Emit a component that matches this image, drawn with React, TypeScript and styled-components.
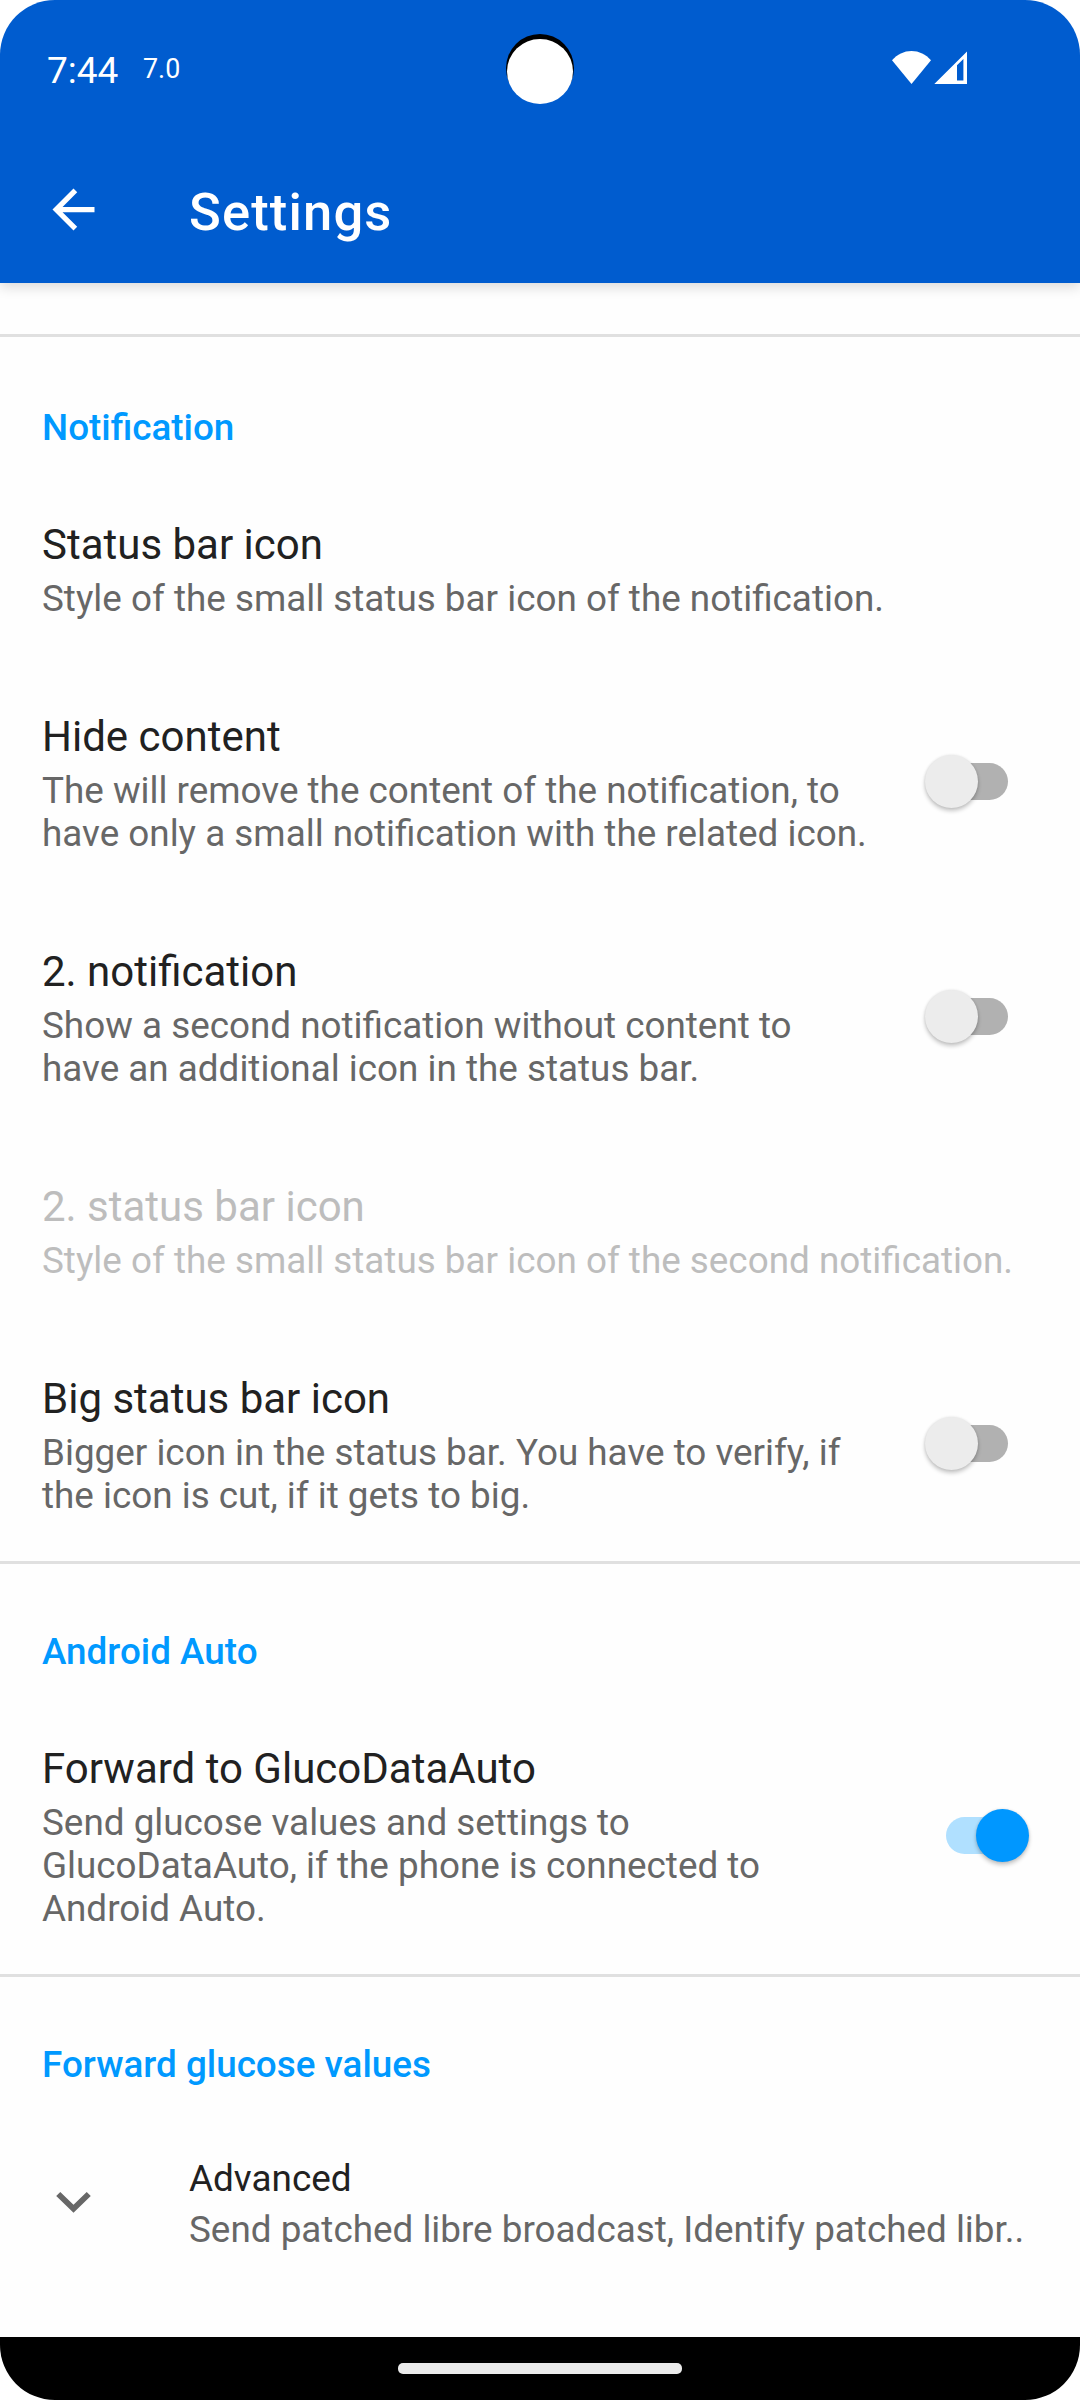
import React from "react";
import styled, { createGlobalStyle } from "styled-components";

const Global = createGlobalStyle`
  * { box-sizing: border-box; }
  body { margin: 0; background: #fff; font-family: Roboto, "Noto Sans", sans-serif; }
`;

const Screen = styled.main`
  position: relative;
  width: 1080px;
  height: 2400px;
  display: flex;
  flex-direction: column;
  border-radius: 55px;
  overflow: hidden;
  background: #fefefe;
`;

const Header = styled.header`
  height: 283px;
  flex: none;
  background: #005ccf;
  color: #fff;
  box-shadow: 0 4px 12px rgba(0, 0, 0, 0.15);
`;

const StatusBar = styled.div`
  height: 136px;
  display: flex;
  align-items: flex-start;
  padding: 49px 113px 0 47px;
`;

const Clock = styled.span`
  width: 96px;
  font-size: 37px;
  line-height: 43px;
`;

const Version = styled.span`
  margin-top: 5px;
  font-size: 26.8px;
  line-height: 30px;
`;

const Signals = styled.svg`
  display: block;
  margin: 2px 0 0 auto;
  fill: #fff;
`;

/* The punch hole lies over the status bar. */
const CameraRing = styled.div`
  position: absolute;
  top: 34px;
  left: 506px;
  width: 68px;
  height: 68px;
  padding: 5px 1px 0;
  border-radius: 50%;
  background: #000;
`;

const CameraLens = styled.div`
  width: 66px;
  height: 65px;
  border-radius: 50%;
  background: #fff;
`;

const AppBar = styled.div`
  height: 147px;
  display: flex;
  align-items: center;
  gap: 84px;
  padding: 0 42px;
`;

const Title = styled.h1`
  margin: 5px 0 0;
  font-size: 52.5px;
  font-weight: 500;
  line-height: 62px;
  letter-spacing: 1.15px;
`;

const Content = styled.div`
  flex: 1;
  min-height: 0;
  padding-top: 51px;
`;

const Section = styled.section<{ $lead?: number }>`
  border-top: 3px solid #e0e0e0;
  padding: ${(p) => p.$lead ?? 0}px 0 1px;
`;

const Category = styled.h2`
  margin: 0;
  padding: 66px 42px 22px;
  font-size: 36.85px;
  line-height: 43px;
  font-weight: 500;
  color: #0099ff;
`;

const Row = styled.div<{ $height: number }>`
  height: ${(p) => p.$height}px;
  padding: 0 42px;
  display: flex;
  align-items: center;
`;

const Copy = styled.div`
  flex: 1;
  align-self: flex-start;
  padding-top: 49px;
  white-space: nowrap;
`;

const Name = styled.div<{ $dim?: boolean; $small?: boolean }>`
  margin-bottom: 8px;
  font-size: ${(p) => (p.$small ? 36.9 : 42)}px;
  line-height: ${(p) => (p.$small ? 43 : 49)}px;
  color: ${(p) => (p.$dim ? "#bdbdbd" : "#212121")};
`;

const Summary = styled.div<{ $dim?: boolean }>`
  font-size: 36.85px;
  line-height: 43px;
  color: ${(p) => (p.$dim ? "#bdbdbd" : "#676767")};
  white-space: pre;
`;

const Track = styled.div<{ $on: boolean }>`
  width: 77px;
  height: 37px;
  margin: ${(p) => (p.$on ? "3px 15px 0 0" : "2px 30px 0 0")};
  flex: none;
  display: flex;
  align-items: center;
  justify-content: ${(p) => (p.$on ? "flex-end" : "flex-start")};
  border-radius: 19px;
  background: ${(p) => (p.$on ? "#b0e0ff" : "#b1b1b1")};
`;

const Knob = styled.div<{ $on: boolean }>`
  width: 53px;
  height: 53px;
  flex: none;
  margin: 0 -6px;
  border-radius: 50%;
  background: ${(p) => (p.$on ? "#0097ff" : "#ececec")};
  box-shadow: 0 3px 4px rgba(0, 0, 0, 0.22), 0 0 3px rgba(0, 0, 0, 0.1);
`;

const ExpandIcon = styled.svg`
  flex: none;
  align-self: flex-start;
  margin: 60px 84px 0 0;
  fill: #676767;
`;

const NavBar = styled.footer`
  height: 63px;
  flex: none;
  display: flex;
  justify-content: center;
  align-items: flex-start;
  padding-top: 26px;
  background: #000;
`;

const Handle = styled.div`
  width: 284px;
  height: 11px;
  border-radius: 5px;
  background: #ebebeb;
`;

function Switch({ on = false }: { on?: boolean }) {
  return (
    <Track $on={on} role="switch" aria-checked={on}>
      <Knob $on={on} />
    </Track>
  );
}

interface PreferenceProps {
  name: string;
  lines: string[];
  toggle?: boolean;
  dim?: boolean;
}

function Preference({ name, lines, toggle, dim }: PreferenceProps) {
  return (
    <Row $height={149 + 43 * lines.length}>
      <Copy>
        <Name $dim={dim}>{name}</Name>
        <Summary $dim={dim}>{lines.join("\n")}</Summary>
      </Copy>
      {toggle !== undefined && <Switch on={toggle} />}
    </Row>
  );
}

export default function App() {
  return (
    <>
      <Global />
      <Screen>
        <Header>
          <StatusBar>
            <Clock>7:44</Clock>
            <Version>7.0</Version>
            <Signals width="75" height="33" viewBox="0 0 75 33">
              <path d="M0 9.2C5.2 3.4 12 0 19.5 0S33.8 3.4 39 9.2L19.5 33Z" />
              <path fillRule="evenodd" d="M42.3 33L75 .4V33ZM65 14.3V29.6H71.4V7.9Z" />
            </Signals>
          </StatusBar>
          <AppBar>
            <svg width="63" height="63" viewBox="0 0 24 24" fill="#fff">
              <path d="M20 11H7.83l5.59-5.59L12 4l-8 8 8 8 1.41-1.41L7.83 13H20v-2z" />
            </svg>
            <Title>Settings</Title>
          </AppBar>
        </Header>
        <Content>
          <Section $lead={3}>
            <Category>Notification</Category>
            <Preference
              name="Status bar icon"
              lines={["Style of the small status bar icon of the notification."]}
            />
            <Preference
              name="Hide content"
              lines={[
                "The will remove the content of the notification, to",
                "have only a small notification with the related icon.",
              ]}
              toggle={false}
            />
            <Preference
              name="2. notification"
              lines={[
                "Show a second notification without content to",
                "have an additional icon in the status bar.",
              ]}
              toggle={false}
            />
            <Preference
              name="2. status bar icon"
              lines={["Style of the small status bar icon of the second notification."]}
              dim
            />
            <Preference
              name="Big status bar icon"
              lines={[
                "Bigger icon in the status bar. You have to verify, if",
                "the icon is cut, if it gets to big.",
              ]}
              toggle={false}
            />
          </Section>
          <Section>
            <Category>Android Auto</Category>
            <Preference
              name="Forward to GlucoDataAuto"
              lines={[
                "Send glucose values and settings to",
                "GlucoDataAuto, if the phone is connected to",
                "Android Auto.",
              ]}
              toggle
            />
          </Section>
          <Section>
            <Category>Forward glucose values</Category>
            <Row $height={192}>
              <ExpandIcon width="63" height="63" viewBox="0 0 63 63">
                <path
                  transform="translate(31.5 34.4) scale(2.88 2.8) translate(-12 -12.295)"
                  d="M16.59 8.59L12 13.17 7.41 8.59 6 10l6 6 6-6z"
                />
              </ExpandIcon>
              <Copy>
                <Name $small>Advanced</Name>
                <Summary>Send patched libre broadcast, Identify patched libr..</Summary>
              </Copy>
            </Row>
          </Section>
        </Content>
        <NavBar>
          <Handle />
        </NavBar>
        <CameraRing>
          <CameraLens />
        </CameraRing>
      </Screen>
    </>
  );
}
